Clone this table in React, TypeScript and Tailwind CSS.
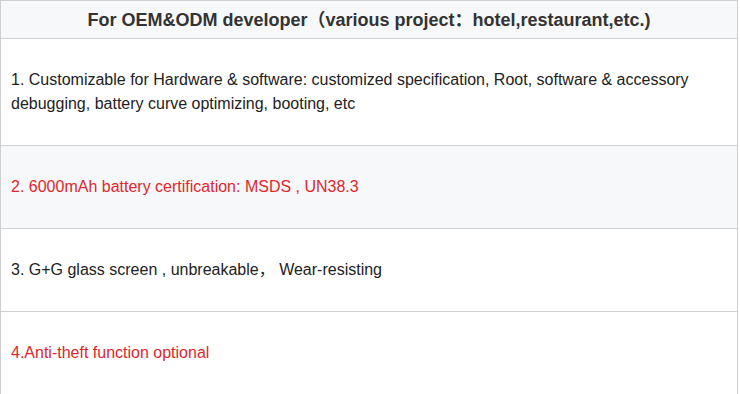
import React from 'react'

interface Row {
  text: string
  red?: boolean
  shaded?: boolean
}

const rows: Row[] = [
  {
    text: '1. Customizable for Hardware & software: customized specification, Root, software & accessory debugging, battery curve optimizing, booting, etc',
  },
  { text: '2. 6000mAh battery certification: MSDS , UN38.3', red: true, shaded: true },
  { text: '3. G+G glass screen , unbreakable， Wear-resisting' },
  { text: '4.Anti-theft function optional', red: true },
]

export default function App() {
  return (
    <div className="w-[740px] h-[394px] overflow-hidden bg-white font-['Liberation_Sans',Arial,'Noto_Sans_CJK_SC',sans-serif]">
      <table className="w-[738px] border-collapse">
        <thead>
          <tr>
            {/* Header */}
            <th className="h-[38px] p-0 border border-[#cfcfcf] bg-[#f7f8fa] text-center text-[18px] leading-[22px] font-bold text-[#333]">
              For OEM&amp;ODM developer（various project：hotel,restaurant,etc.)
            </th>
          </tr>
        </thead>
        <tbody>
          {rows.map((row, idx) => (
            <tr key={idx}>
              <td
                className={`border border-[#cfcfcf] px-[10px] py-[29px] text-[16px] leading-[24px] ${
                  row.shaded ? 'bg-[#f7f8fa]' : 'bg-white'
                } ${row.red ? 'text-[#e3262c]' : 'text-[#222]'}`}
              >
                {row.text}
              </td>
            </tr>
          ))}
        </tbody>
      </table>
    </div>
  )
}
